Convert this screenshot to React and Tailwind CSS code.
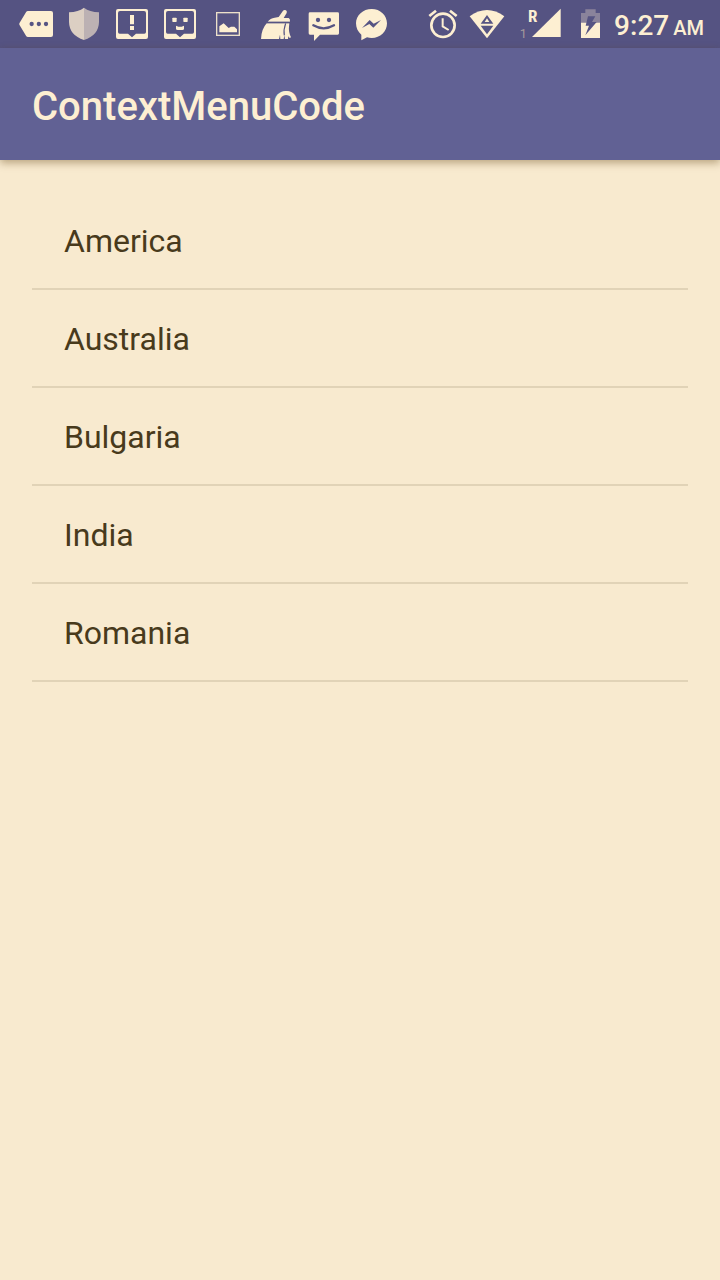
const countries = ["America", "Australia", "Bulgaria", "India", "Romania"];

const CREAM = "#fdefd2";
const BAR = "#565483";

function Icon({ viewBox, className, label, children }) {
  return (
    <svg viewBox={viewBox} className={`h-12 shrink-0 ${className}`} role="img" aria-label={label}>
      {children}
    </svg>
  );
}

function NotificationIcons() {
  return (
    <div className="flex">
      <Icon viewBox="6 0 144 144" className="w-12" label="More notifications">
        <path fill={CREAM} d="M54 33H123Q129 33 129 39V105Q129 111 123 111H54Q50 111 48 107L29 76Q26 72 29 68L48 37Q50 33 54 33Z" />
        <g fill={BAR}>
          <circle cx="65" cy="72" r="6.5" />
          <circle cx="86.5" cy="72" r="6.5" />
          <circle cx="108" cy="72" r="6.5" />
        </g>
      </Icon>
      <Icon viewBox="150 0 144 144" className="w-12" label="Security">
        <path fill="#dccfc3" d="M222 23Q205 36 177 37V66Q178 106 222 120Z" />
        <path fill="#bcb1b3" d="M222 23Q239 36 267 37V66Q266 106 222 120Z" />
      </Icon>
      <Icon viewBox="6 0 144 144" className="w-12" label="Alert">
        <path fill={CREAM} fillRule="evenodd" d="M36 27H120Q126 27 126 33V111Q126 117 120 117H36Q30 117 30 111V33Q30 27 36 27ZM42 33Q36 33 36 39V96Q36 101 41 101H66L78 112L90 101H115Q120 101 120 96V39Q120 33 114 33Z" />
        <path fill={CREAM} d="M72 45H84V73H72ZM72 78H84V90H72Z" />
      </Icon>
      <Icon viewBox="150 0 144 144" className="w-12" label="Message">
        <path fill={CREAM} fillRule="evenodd" d="M180 27H264Q270 27 270 33V111Q270 117 264 117H180Q174 117 174 111V33Q174 27 180 27ZM186 33Q180 33 180 39V96Q180 101 185 101H210L222 112L234 101H259Q264 101 264 96V39Q264 33 258 33Z" />
        <rect x="199" y="53" width="13" height="13" rx="2" fill={CREAM} />
        <rect x="232" y="53" width="13" height="13" rx="2" fill={CREAM} />
        <path fill={CREAM} d="M210 77L217 80H227L234 77V86Q234 90 229 90H215Q210 90 210 86Z" />
      </Icon>
      <Icon viewBox="0 0 144 144" className="w-12" label="Picture">
        <rect x="38" y="38" width="68" height="68" fill="none" stroke={CREAM} strokeWidth="4" opacity=".9" />
        <path fill={CREAM} d="M46 97V79L59 70L74 84L81 80H91L99 88V97Z" />
      </Icon>
      <Icon viewBox="144 0 144 144" className="w-12" label="Cleaner">
        <path fill={CREAM} d="M191 65Q199 54 212 53L224 51L236 34Q240 28 246 31Q250 34 248 39L239 54H254Q259 56 258 65Z" />
        <path fill={CREAM} d="M188 70H256L255 80Q253 94 261 112L257 114L253 109L252 117H243L241 106L239 117H229L228 104L225 117H171Q172 88 188 70Z" />
        <path fill="none" stroke={BAR} strokeWidth="4" d="M186 67.500H260" />
        <path fill="none" stroke={BAR} strokeWidth="3.500" d="M245 70Q238 89 241 106" />
      </Icon>
      <Icon viewBox="0 0 144 144" className="w-12" label="SMS">
        <path fill={CREAM} d="M30 37H113Q117 37 117 41V100Q117 104 113 104H60L42 123V104H30Q26 104 26 100V41Q26 37 30 37Z" />
        <circle cx="54" cy="60" r="6.5" fill={BAR} />
        <circle cx="87" cy="60" r="6.5" fill={BAR} />
        <path d="M40 76Q71 94 102 76" fill="none" stroke={BAR} strokeWidth="7" strokeLinecap="round" />
      </Icon>
      <Icon viewBox="144 0 144 144" className="w-12" label="Messenger">
        <path fill={CREAM} d="M215 27C189 27 168 46 168 70C168 84 174 96 184 104V121L201 112Q208 114 215 114C241 114 261 95 261 70C261 46 241 27 215 27Z" />
        <path fill={BAR} d="M186 84L209 60L221 71L243 60L220 83L208 72Z" />
      </Icon>
    </div>
  );
}

function SystemIcons() {
  return (
    <div className="flex">
      <Icon viewBox="24 0 90 144" className="mr-[11px] w-[30px]" label="Alarm">
        <g fill="none" stroke={CREAM}>
          <circle cx="69" cy="76" r="35" strokeWidth="8" />
          <path d="M28 48L48 32M90 32L110 48" strokeWidth="8" />
          <path d="M68 55V79L86 90" strokeWidth="6" />
        </g>
      </Icon>
      <Icon viewBox="147 0 108 144" className="mr-3.5 w-9" label="Wi-Fi">
        <path fill={CREAM} d="M149 49Q201 11 253 49L201 115Z" />
        <path fill={BAR} fillRule="evenodd" d="M201 45L220 71H182ZM201 55L194 66H208Z" />
        <path fill={BAR} d="M182 77H220L201 103Z" />
      </Icon>
      <Icon viewBox="27 0 126 144" className="mr-5 w-[42px]" label="Signal, roaming, SIM 1">
        <path fill={CREAM} d="M66 111L152 26V111Z" />
        <text x="54" y="66" fill={CREAM} fontFamily="'Roboto Condensed', 'Liberation Sans Narrow', Roboto, sans-serif" fontWeight="700" fontSize="51">R</text>
        <text x="29" y="114" fill="#a39a9c" fontFamily="Roboto, sans-serif" fontSize="38">1</text>
      </Icon>
      <Icon viewBox="213 0 57 144" className="mr-3.5 w-[19px]" label="Battery charging">
        <path fill="#8a839b" d="M213 68V39H226V28H257V39H270V68Z" />
        <path fill={CREAM} d="M213 68H270V114H213Z" />
        <path fill={BAR} d="M234 49H256L246 66H260L226 106L237 77H227Z" />
      </Icon>
    </div>
  );
}

export default function App() {
  return (
    <div className="min-h-screen bg-[#f8eacf] font-['Roboto',sans-serif]">
      <div className="flex h-12 items-center justify-between bg-[#555382] pr-4 pl-3 text-[#fdefd2]">
        <NotificationIcons />
        <div className="flex items-center">
          <SystemIcons />
          <time className="flex items-baseline gap-1 pt-1.5 font-medium whitespace-nowrap">
            <span className="text-[28px] leading-8">9:27</span>
            <span className="text-xl leading-8">AM</span>
          </time>
        </div>
      </div>
      <header className="flex h-28 items-center bg-[#616194] px-8 pt-1.5 shadow-[0_3px_8px_rgba(90,60,10,0.4)]">
        <h1 className="text-[40px] leading-12 font-medium text-[#fdefd2]">ContextMenuCode</h1>
      </header>
      <main className="px-8 pt-8">
        <ul>
          {countries.map((country) => (
            <li key={country} className="border-b-2 border-[#e1d3b7]">
              <button type="button" className="flex h-24 w-full items-center px-8 pt-0.5 text-left text-[32px] leading-10 text-[#483a1c]">
                {country}
              </button>
            </li>
          ))}
        </ul>
      </main>
    </div>
  );
}
